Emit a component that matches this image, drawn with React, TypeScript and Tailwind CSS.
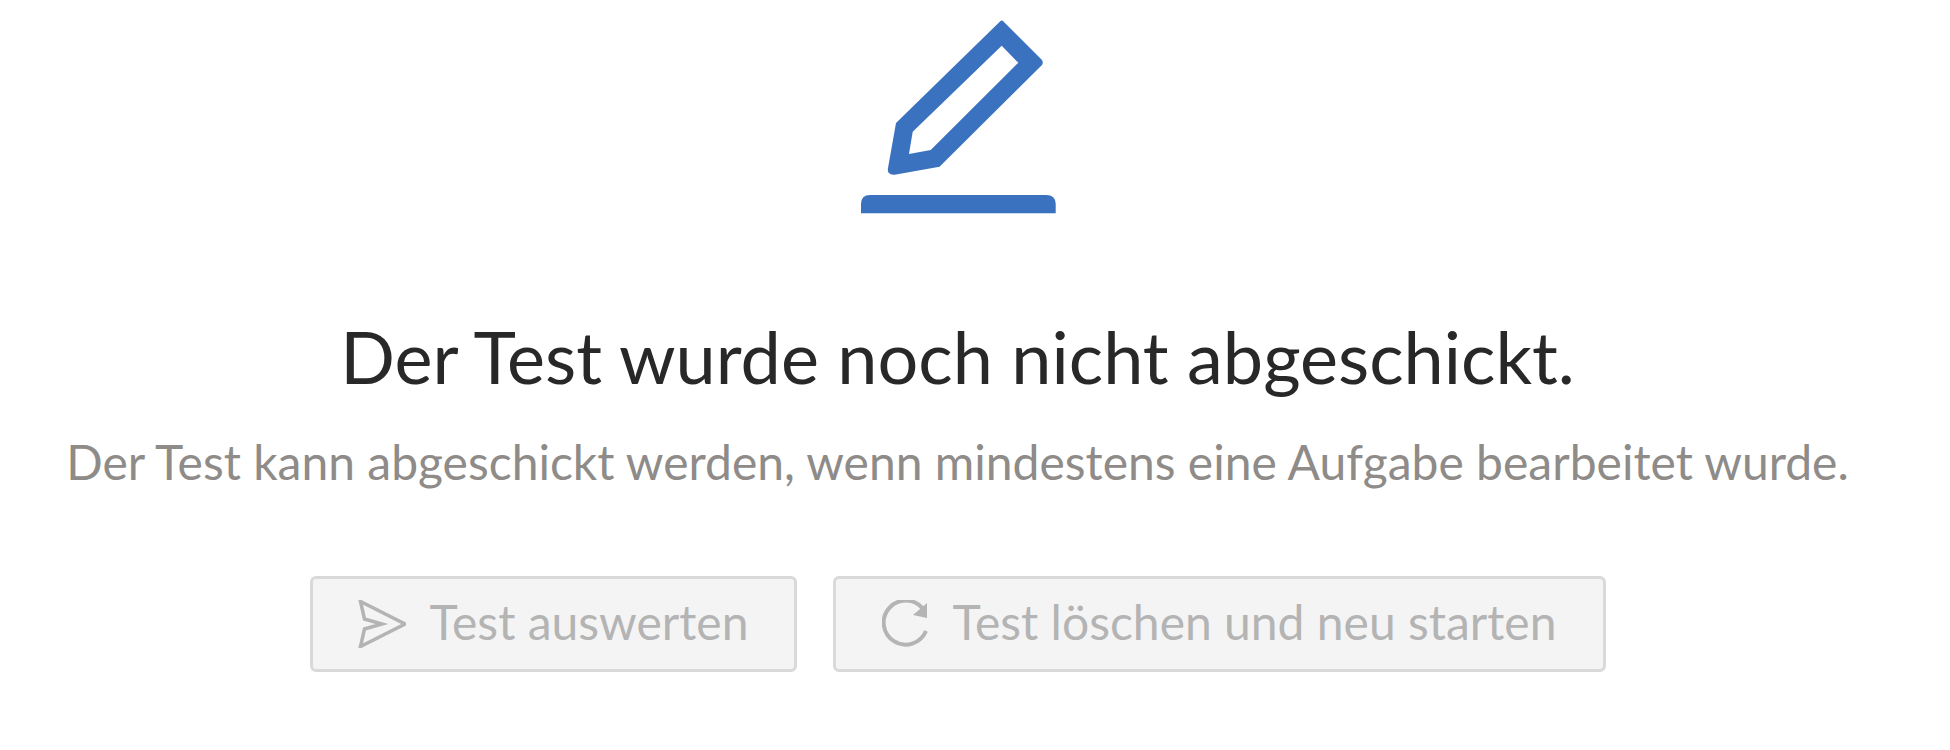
export default function App() {
  return (
    <div className="min-h-[750px] bg-white flex flex-col items-center pr-[35px] font-['Lato','Noto_Sans',sans-serif]">
      <svg className="mt-[18px] w-[196px] h-[196px] shrink-0" viewBox="860 18 196 196" fill="#3a72bf">
        <path fillRule="evenodd" d="M1000 21.5 Q1001.7 19.5 1003.5 21.5 L1042 60 Q1043.5 62.7 1042 65 L939.5 166.7 L896 174.5 Q891 175.6 888.5 172.5 Q887.5 171 888 168 L896 123 Z M1001.7 45.7 L912.7 131.7 L909 154 L930.7 150 L1018.3 62.7 Z" />
        <path d="M861 213.3 V204 Q861 195 870 195 H1046 Q1055.7 195 1055.7 204 V213.3 Z" />
      </svg>
      <h1 className="mt-[100px] text-[72px] leading-[84px] font-normal text-[#282828] whitespace-nowrap">Der Test wurde noch nicht abgeschickt.</h1>
      <p className="mt-[34px] text-[48px] leading-[60px] text-[#8e8b88] whitespace-nowrap">Der Test kann abgeschickt werden, wenn mindestens eine Aufgabe bearbeitet wurde.</p>
      <div className="mt-[84px] flex gap-[36px] text-[48px] text-[#b4b4b4]">
        <button className="h-[96px] w-[487px] flex items-center justify-center gap-[24px] bg-[#f4f4f4] border-[3px] border-[#d9d9d9] rounded-[6px]">
          <svg className="w-[48px] h-[48px] shrink-0" viewBox="357 597 48 48" fill="none" stroke="#b4b4b4" strokeWidth="3.5">
            <path d="M359.5 598.5 L404 621 L359.5 643.5 L363.5 626 L381 621 L363.5 616 Z" />
          </svg>
          <span className="pb-[4px]">Test auswerten</span>
        </button>
        <button className="h-[96px] w-[773px] flex items-center justify-center gap-[23px] bg-[#f4f4f4] border-[3px] border-[#d9d9d9] rounded-[6px]">
          <svg className="w-[48px] h-[48px] shrink-0" viewBox="882 598 48 48" fill="none" stroke="#b4b4b4" strokeWidth="4">
            <path d="M926 629 A22 22 0 1 1 923 607" />
            <path d="M927 601 L927 616 L913 613 Z" fill="#b4b4b4" stroke="none" />
          </svg>
          <span className="pb-[4px]">Test löschen und neu starten</span>
        </button>
      </div>
    </div>
  );
}
